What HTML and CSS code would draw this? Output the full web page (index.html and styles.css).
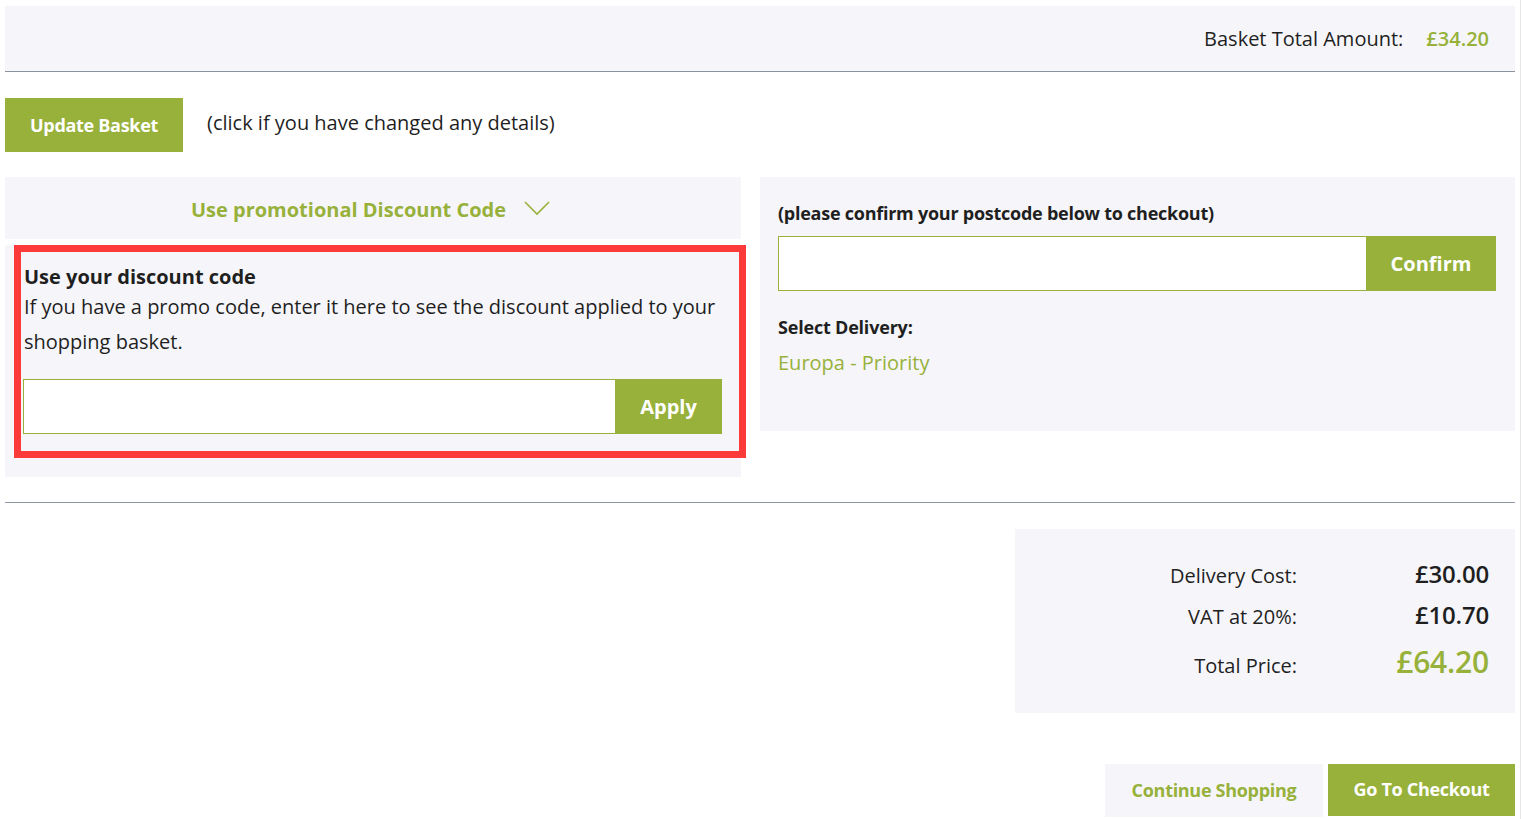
FILE: index.html
```html
<!DOCTYPE html>
<html lang="en">
<head>
<meta charset="utf-8">
<title>Basket</title>
<link rel="stylesheet" href="styles.css">
</head>
<body>
<div class="page">
  <div class="inner">
    <div class="topbar">
      <span class="topbar-label">Basket Total Amount:</span>
      <span class="topbar-value">£34.20</span>
    </div>

    <div class="update-row">
      <button class="btn btn-green update-btn">Update Basket</button>
      <span class="update-note">(click if you have changed any details)</span>
    </div>

    <div class="panels">
      <div class="promo">
        <div class="promo-head">
          <span>Use promotional Discount Code</span>
          <svg class="chevron" width="26" height="16" viewBox="0 0 26 16"><path d="M1 2 L13 14 L25 2" fill="none" stroke="#97b13b" stroke-width="1.6"/></svg>
        </div>
        <div class="promo-body">
          <div class="promo-box">
            <div class="promo-title">Use your discount code</div>
            <p class="promo-text">If you have a promo code, enter it here to see the discount applied to your shopping basket.</p>
            <div class="field-row">
              <input class="field promo-field" type="text">
              <button class="btn btn-green apply-btn">Apply</button>
            </div>
          </div>
        </div>
      </div>

      <div class="postcode">
        <div class="pc-title">(please confirm your postcode below to checkout)</div>
        <div class="field-row">
          <input class="field pc-field" type="text">
          <button class="btn btn-green confirm-btn">Confirm</button>
        </div>
        <div class="deliv-label">Select Delivery:</div>
        <div class="deliv-value">Europa - Priority</div>
      </div>
    </div>

    <div class="divider"></div>

    <div class="totals-wrap">
      <div class="totals">
        <div class="t-row"><span class="t-label">Delivery Cost:</span><span class="t-val">£30.00</span></div>
        <div class="t-row"><span class="t-label">VAT at 20%:</span><span class="t-val">£10.70</span></div>
        <div class="t-row t-total"><span class="t-label">Total Price:</span><span class="t-val">£64.20</span></div>
      </div>
    </div>

    <div class="actions">
      <button class="btn continue-btn">Continue Shopping</button>
      <button class="btn btn-green checkout-btn">Go To Checkout</button>
    </div>
  </div>
</div>
</body>
</html>
```

FILE: styles.css
```css
* { box-sizing: border-box; }
html, body { margin: 0; padding: 0; background: #fff; }
body {
  font-family: "Open Sans", "Noto Sans", sans-serif;
  color: #1f1f1f;
}
.page {
  width: 1521px;
  min-height: 819px;
  border-right: 1px solid #e6e6ea;
}
.inner {
  width: 1510px;
  margin-left: 5px;
  padding-top: 6px;
}
.btn {
  font-family: "Open Sans", "Noto Sans", sans-serif;
  font-weight: 700;
  border: none;
  cursor: pointer;
  padding: 0;
}
.btn-green { background: #97b13b; color: #fff; }

.topbar {
  height: 66px;
  background: #f6f6fa;
  border-bottom: 1px solid #8c939f;
  display: flex;
  justify-content: flex-end;
  align-items: center;
  padding-right: 26px;
  padding-bottom: 1px;
  font-size: 20px;
}
.topbar-value { color: #97b13b; margin-left: 23px; font-weight: 600; }

.update-row {
  margin-top: 26px;
  display: flex;
  align-items: center;
}
.update-btn {
  width: 178px;
  height: 54px;
  font-size: 18px;
  letter-spacing: -0.3px;
}
.update-note {
  margin-left: 24px;
  font-size: 20px;
  margin-top: -5px;
}

.panels {
  margin-top: 25px;
  display: flex;
  align-items: flex-start;
  gap: 19px;
}
.promo { width: 736px; }
.promo-head {
  height: 62px;
  background: #f6f6fa;
  display: flex;
  justify-content: center;
  align-items: center;
  gap: 18px;
  color: #97b13b;
  font-weight: 700;
  font-size: 20px;
  padding-right: 5px;
  padding-top: 3px;
}
.chevron { margin-top: -3px; }
.promo-body {
  margin-top: 6px;
  background: #f6f6fa;
  height: 232px;
  padding-left: 9px;
}
.promo-box {
  width: 732px;
  height: 213px;
  border: 7px solid #fc3a3a;
  padding: 12px 17px 0 3px;
}
.promo-title {
  font-weight: 700;
  font-size: 20px;
  line-height: 26px;
}
.promo-text {
  margin: 0;
  font-size: 20px;
  line-height: 35px;
  margin-top: -1px;
}
.field-row { display: flex; }
.promo-box .field-row { margin-top: 20px; margin-left: -1px; }
.field {
  border: 1px solid #97b13b;
  background: #fff;
  height: 55px;
  outline: none;
  font-family: inherit;
}
.promo-field { width: 592px; border-right: none; }
.apply-btn { width: 107px; height: 55px; font-size: 20px; }

.postcode {
  width: 755px;
  height: 254px;
  background: #f6f6fa;
  padding: 24px 19px 0 18px;
}
.pc-title {
  font-weight: 700;
  font-size: 18px;
  line-height: 25px;
  letter-spacing: -0.25px;
}
.postcode .field-row { margin-top: 10px; }
.pc-field { width: 588px; border-right: none; }
.confirm-btn { width: 130px; height: 55px; font-size: 20px; }
.deliv-label {
  margin-top: 24px;
  font-weight: 700;
  font-size: 18px;
  line-height: 25px;
  letter-spacing: -0.2px;
}
.deliv-value {
  margin-top: 9px;
  color: #97b13b;
  font-size: 20px;
  line-height: 28px;
}

.divider {
  margin-top: 25px;
  height: 1px;
  background: #8c98a6;
}

.totals-wrap {
  display: flex;
  justify-content: flex-end;
  margin-top: 26px;
}
.totals {
  width: 500px;
  height: 184px;
  background: #f6f6fa;
  padding: 28px 26px 0 0;
}
.t-row {
  display: flex;
  justify-content: flex-end;
  align-items: baseline;
  height: 41px;
}
.t-label {
  font-size: 20px;
  text-align: right;
}
.t-val {
  width: 192px;
  text-align: right;
  font-size: 24px;
  font-weight: 600;
  letter-spacing: -0.2px;
}
.t-total { margin-top: 2px; }
.t-total .t-val { color: #97b13b; font-size: 30px; font-weight: 600; }

.actions {
  margin-top: 51px;
  display: flex;
  justify-content: flex-end;
  gap: 5px;
}
.continue-btn {
  width: 218px;
  height: 53px;
  background: #f6f6fa;
  color: #97b13b;
  font-size: 18px;
  letter-spacing: -0.3px;
  padding-bottom: 2px;
}
.checkout-btn {
  width: 187px;
  height: 52px;
  font-size: 18px;
  letter-spacing: -0.3px;
  padding-bottom: 2px;
}
```
